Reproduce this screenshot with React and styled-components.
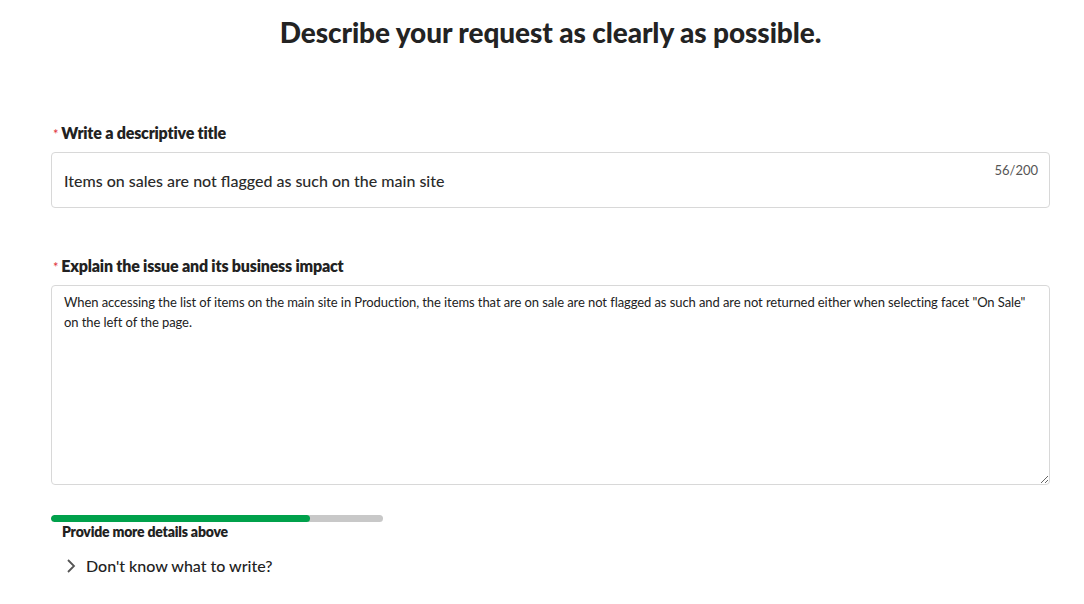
import React from 'react';
import styled, { createGlobalStyle } from 'styled-components';

const GlobalStyle = createGlobalStyle`
  body {
    margin: 0;
    background: #fff;
    font-family: Lato, "Open Sans", sans-serif;
    color: #222;
  }
`;

function Field({ label, gap, children }) {
  return (
    <FieldBlock $gap={gap}>
      <Label>
        <Star>*</Star>
        {label}
      </Label>
      {children}
    </FieldBlock>
  );
}

export default function App() {
  return (
    <Page>
      <GlobalStyle />
      <Heading>Describe your request as clearly as possible.</Heading>

      <Field label="Write a descriptive title" gap={48}>
        <InputBox>
          <InputText>Items on sales are not flagged as such on the main site</InputText>
          <Counter>56/200</Counter>
        </InputBox>
      </Field>

      <Field label="Explain the issue and its business impact" gap={30}>
        <TextArea
          defaultValue={'When accessing the list of items on the main site in Production, the items that are on sale are not flagged as such and are not returned either when selecting facet "On Sale" on the left of the page.'}
        />
      </Field>

      <Progress>
        <Track>
          <Fill style={{ width: `${(259 / 332) * 100}%` }} />
        </Track>
        <Hint>Provide more details above</Hint>
      </Progress>

      <Toggle>
        <svg width="14" height="16" viewBox="0 0 14 16">
          <path d="M4 2 L10 8 L4 14" fill="none" stroke="#555" strokeWidth="1.8" />
        </svg>
        <span>Don't know what to write?</span>
      </Toggle>
    </Page>
  );
}

const Page = styled.div`
  width: 999px;
  margin-left: 51px;
  padding-top: 14px;
`;

const Heading = styled.h1`
  margin: 0 0 73px;
  text-align: center;
  font-size: 28px;
  font-weight: 900;
  color: #232323;
  letter-spacing: -0.1px;
  line-height: 36px;
`;

const FieldBlock = styled.div`
  margin-bottom: ${(p) => p.$gap}px;
`;

const Label = styled.div`
  display: flex;
  align-items: baseline;
  height: 22px;
  font-size: 16px;
  font-weight: 800;
  color: #222;
  margin-bottom: 7px;
  line-height: 20px;
  letter-spacing: -0.2px;
`;

const Star = styled.span`
  color: #e0303a;
  font-size: 13px;
  font-weight: 400;
  margin-left: 2px;
  margin-right: 3px;
`;

const InputBox = styled.div`
  position: relative;
  box-sizing: border-box;
  height: 56px;
  border: 1px solid #d8d8d8;
  border-radius: 4px;
  display: flex;
  align-items: center;
  padding: 0 12px;
`;

const InputText = styled.span`
  font-size: 16px;
  font-weight: 500;
  color: #2a2a2a;
`;

const Counter = styled.span`
  position: absolute;
  top: 9px;
  right: 11px;
  font-size: 13px;
  color: #555;
`;

const TextArea = styled.textarea`
  display: block;
  box-sizing: border-box;
  width: 100%;
  height: 200px;
  border: 1px solid #d8d8d8;
  border-radius: 4px;
  padding: 6px 12px;
  font-family: Lato, "Open Sans", sans-serif;
  font-size: 13px;
  line-height: 20px;
  letter-spacing: -0.08px;
  color: #222;
  outline: none;
  resize: vertical;
`;

const Progress = styled.div`
  width: 332px;
`;

const Track = styled.div`
  height: 7px;
  border-radius: 4px;
  background: #c8c8c8;
  overflow: hidden;
`;

const Fill = styled.div`
  height: 100%;
  border-radius: 4px;
  background: #00a14b;
`;

const Hint = styled.div`
  margin-top: 1px;
  padding-left: 11px;
  font-size: 14px;
  font-weight: 800;
  color: #222;
  line-height: 18px;
  letter-spacing: -0.2px;
`;

const Toggle = styled.div`
  display: flex;
  align-items: center;
  gap: 8px;
  margin-top: 15px;
  padding-left: 13px;
  font-size: 16px;
  font-weight: 500;
  line-height: 20px;
  color: #222;
`;
